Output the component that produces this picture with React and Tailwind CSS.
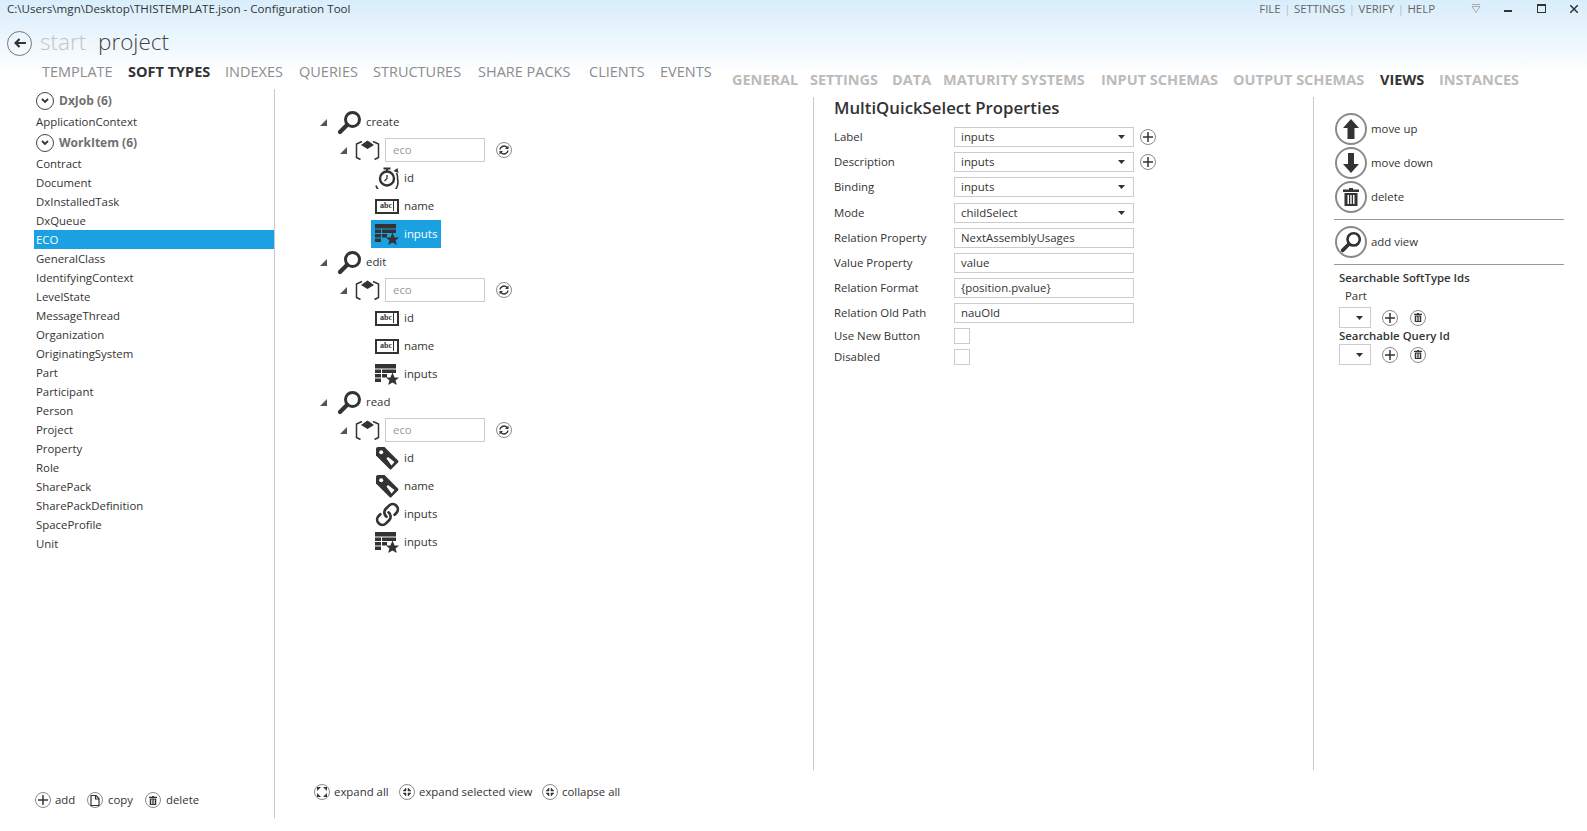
import { Link } from "lucide-react";

const DARK = "#333333";

const leftTabs = [
  ["TEMPLATE", "w-[86px]"],
  ["SOFT TYPES", "w-[97px] font-bold text-[#333]"],
  ["INDEXES", "w-[74px]"],
  ["QUERIES", "w-[74px]"],
  ["STRUCTURES", "w-[105px]"],
  ["SHARE PACKS", "w-[111px]"],
  ["CLIENTS", "w-[71px]"],
  ["EVENTS", "w-[72px]"],
];

const rightTabs = [
  ["GENERAL", "w-[78px]"],
  ["SETTINGS", "w-[82px]"],
  ["DATA", "w-[51px]"],
  ["MATURITY SYSTEMS", "w-[158px]"],
  ["INPUT SCHEMAS", "w-[132px]"],
  ["OUTPUT SCHEMAS", "w-[147px]"],
  ["VIEWS", "w-[59px] text-[#333]"],
  ["INSTANCES", "w-[90px]"],
];

const softTypes = [
  "Contract",
  "Document",
  "DxInstalledTask",
  "DxQueue",
  "ECO",
  "GeneralClass",
  "IdentifyingContext",
  "LevelState",
  "MessageThread",
  "Organization",
  "OriginatingSystem",
  "Part",
  "Participant",
  "Person",
  "Project",
  "Property",
  "Role",
  "SharePack",
  "SharePackDefinition",
  "SpaceProfile",
  "Unit",
];

const Magnifier = ({ size = 25 }) => (
  <svg width={size} height={size} viewBox="0 0 25 24" className="shrink-0">
    <circle cx="15.5" cy="9" r="7" fill="none" stroke={DARK} strokeWidth="3" />
    <line x1="10" y1="14.5" x2="3" y2="21.5" stroke={DARK} strokeWidth="4.2" strokeLinecap="round" />
  </svg>
);

const CubeIcon = () => (
  <svg width="25" height="24" viewBox="0 0 25 24" className="shrink-0">
    <path d="M7 3.5 L1.5 6 V19.5 L5.5 21.5" fill="none" stroke={DARK} strokeWidth="1.5" />
    <path d="M18 3.5 L23.5 6 V19.5 L19.5 21.5" fill="none" stroke={DARK} strokeWidth="1.5" />
    <path d="M12.5 2.5 L19 7 L12.5 11 L6 7 Z" fill={DARK} />
  </svg>
);

const Stopwatch = () => (
  <svg width="24" height="22" viewBox="0 0 24 22" className="shrink-0">
    <circle cx="12" cy="11.5" r="7" fill="none" stroke={DARK} strokeWidth="2.4" />
    <rect x="8.5" y="0.5" width="7" height="2" fill={DARK} />
    <rect x="11" y="2" width="2" height="2" fill={DARK} />
    <path d="M12 8 V11.5 L9.5 14" fill="none" stroke={DARK} strokeWidth="1.3" />
    <path d="M1 18.5 A10.5 10.5 0 0 0 22.5 12 A10 10 0 0 0 21.5 6" fill="none" stroke={DARK} strokeWidth="1.6" />
    <path d="M18.5 4 L22.5 1 L23.5 6 Z" fill={DARK} />
  </svg>
);

const AbcIcon = () => (
  <span className="flex h-[15px] w-[24px] shrink-0 items-center justify-center border-2 border-[#333] font-['Liberation_Serif',serif] text-[8px] leading-none font-bold text-[#333]">
    abc<span className="ml-[1px] h-[10px] w-[1px] bg-[#333]" />
  </span>
);

const TableStar = () => (
  <svg width="24" height="21" viewBox="0 0 24 21" className="shrink-0">
    <rect x="0" y="0" width="21" height="4.5" fill={DARK} />
    <rect x="0" y="5.5" width="6" height="3.5" fill={DARK} />
    <rect x="7" y="5.5" width="14" height="3.5" fill={DARK} />
    <rect x="0" y="10" width="6" height="3.5" fill={DARK} />
    <rect x="7" y="10" width="5" height="3.5" fill={DARK} />
    <rect x="0" y="14.5" width="6" height="3.5" fill={DARK} />
    <path d="M17.5 8.5 L19.6 13.4 L24 13.6 L20.6 16.5 L21.8 21 L17.5 18.5 L13.2 21 L14.4 16.5 L11 13.6 L15.4 13.4 Z" fill={DARK} />
  </svg>
);

const TagIcon = () => (
  <svg width="24" height="24" viewBox="0 0 24 24" className="shrink-0">
    <path d="M3 1 H9.5 L23 14.5 Q24 15.5 23 16.5 L16.5 23 Q15.5 24 14.5 23 L1 9.5 V3 Q1 1 3 1 Z" fill={DARK} />
    <circle cx="6.2" cy="6.2" r="2" fill="#fff" />
    <path d="M11.5 12.5 L13 11 L19.5 16 L16.5 19.5 Z" fill="#fff" />
  </svg>
);

const LinkIcon = () => <Link size={25} strokeWidth={2.6} color={DARK} className="shrink-0 -scale-x-100 rotate-90" />;

const CircleBtn = ({ size = "h-4 w-4", children }) => (
  <span className={`flex ${size} shrink-0 items-center justify-center rounded-full border border-[#8a8a8a] bg-white`}>
    {children}
  </span>
);

const Plus = () => (
  <svg width="10" height="10" viewBox="0 0 10 10">
    <path d="M5 0 V10 M0 5 H10" stroke={DARK} strokeWidth="1.5" />
  </svg>
);

const Trash = ({ w = 8, h = 9 }) => (
  <svg width={w} height={h} viewBox="0 0 16 18">
    <path d="M6 0 H10 V1.5 H16 V4 H0 V1.5 H6 Z" fill={DARK} />
    <path d="M1.5 5 H14.5 V18 H1.5 Z M4.5 7 V16 H6 V7 Z M7.3 7 V16 H8.7 V7 Z M10 7 V16 H11.5 V7 Z" fill={DARK} fillRule="evenodd" />
  </svg>
);

const Copy = () => (
  <svg width="10" height="11" viewBox="0 0 10 11">
    <path d="M1 .5 H6 L9 3.5 V10.5 H1 Z" fill="none" stroke={DARK} strokeWidth="1.2" />
    <path d="M5.5 .5 V4 H9" fill="none" stroke={DARK} strokeWidth="1.2" />
  </svg>
);

const Refresh = () => (
  <svg width="10" height="10" viewBox="0 0 10 10">
    <path d="M1 4.5 A4 4 0 0 1 8 2.5" fill="none" stroke={DARK} strokeWidth="1.5" />
    <path d="M9.5 .5 V4 H6 Z" fill={DARK} />
    <path d="M9 5.5 A4 4 0 0 1 2 7.5" fill="none" stroke={DARK} strokeWidth="1.5" />
    <path d="M.5 9.5 V6 H4 Z" fill={DARK} />
  </svg>
);

const Expand = ({ inward }) => (
  <svg width="10" height="10" viewBox="0 0 10 10">
    {inward ? (
      <path d="M4 1 V4 H1 Z M6 1 V4 H9 Z M4 9 V6 H1 Z M6 9 V6 H9 Z" fill={DARK} stroke={DARK} strokeWidth=".5" />
    ) : (
      <path d="M0 0 H4 L0 4 Z M10 0 H6 L10 4 Z M0 10 H4 L0 6 Z M10 10 H6 L10 6 Z" fill={DARK} />
    )}
  </svg>
);

const Triangle = () => (
  <svg width="7" height="7" viewBox="0 0 7 7" className="mr-[1px] shrink-0">
    <polygon points="0,7 7,7 7,0" fill="#555" />
  </svg>
);

const Chevron = () => (
  <span className="flex h-[18px] w-[18px] shrink-0 items-center justify-center rounded-full border-[1.5px] border-[#444]">
    <svg width="8" height="6" viewBox="0 0 8 6">
      <path d="M1 1 L4 4 L7 1" fill="none" stroke="#333" strokeWidth="1.8" />
    </svg>
  </span>
);

const ViewRow = ({ name }) => (
  <div className="flex h-[28px] items-center pl-[45px]">
    <Triangle />
    <span className="ml-[9px] flex"><Magnifier /></span>
    <span className="ml-[4px]">{name}</span>
  </div>
);

const EcoRow = () => (
  <div className="flex h-[28px] items-center pl-[65px]">
    <Triangle />
    <span className="ml-[7px] flex"><CubeIcon /></span>
    <div className="ml-[5px] flex h-[24px] w-[100px] items-center border border-[#ccc] pl-[7px] text-[#999]">eco</div>
    <span className="ml-[11px] flex"><CircleBtn><Refresh /></CircleBtn></span>
  </div>
);

const Leaf = ({ icon, label, selected }) => (
  <div className="flex h-[28px] items-center pl-[96px]">
    <div className={`flex h-[28px] w-[70px] items-center pl-[4px] ${selected ? "bg-[#1ba1e2] text-white" : ""}`}>
      <span className="flex w-[24px] justify-center">{icon}</span>
      <span className="ml-[5px]">{label}</span>
    </div>
  </div>
);

const Select = ({ value }) => (
  <div className="flex h-[20px] w-[180px] items-center justify-between border border-[#ccc] px-[6px]">
    <span>{value}</span>
    <svg width="7" height="4" viewBox="0 0 7 4" className="mr-[2px]"><polygon points="0,0 7,0 3.5,4" fill="#333" /></svg>
  </div>
);

const TextBox = ({ value }) => (
  <div className="flex h-[20px] w-[180px] items-center border border-[#ccc] px-[6px]">{value}</div>
);

const PropRow = ({ label, children, plus, className = "mb-[5px]" }) => (
  <div className={`flex h-[20px] items-center ${className}`}>
    <span className="w-[120px]">{label}</span>
    {children}
    {plus && <span className="ml-[6px] flex"><CircleBtn><Plus /></CircleBtn></span>}
  </div>
);

const SideBtn = ({ icon, label, className = "" }) => (
  <div className={`ml-[1px] flex h-[34px] items-center ${className}`}>
    <span className="flex h-[32px] w-[32px] items-center justify-center rounded-full border-2 border-[#8a8a8a]">{icon}</span>
    <span className="ml-[4px]">{label}</span>
  </div>
);

const SmallSelect = () => (
  <div className="flex h-[21px] w-[32px] items-center justify-center border border-[#ccc] pl-[8px]">
    <svg width="7" height="4" viewBox="0 0 7 4"><polygon points="0,0 7,0 3.5,4" fill="#333" /></svg>
  </div>
);

const SearchRow = () => (
  <div className="flex items-center">
    <SmallSelect />
    <span className="ml-[11px] flex"><CircleBtn><Plus /></CircleBtn></span>
    <span className="ml-[12px] flex"><CircleBtn><Trash /></CircleBtn></span>
  </div>
);

const App = () => {
  return (
    <div className="h-[831px] w-[1587px] overflow-hidden bg-white font-['Open_Sans',sans-serif] text-[11.4px] text-[#333]">
      {/* header */}
      <div className="h-[89px] bg-linear-to-b from-[#d8edfb] to-white to-[85%]">
        <div className="flex h-[18px] items-center justify-between pl-[7px]">
          <span className="text-[11.6px]">C:\Users\mgn\Desktop\THISTEMPLATE.json - Configuration Tool</span>
          <div className="flex items-center text-[#666]">
            <span>FILE</span>
            <span className="mx-[3.5px] text-[#bbb]">|</span>
            <span>SETTINGS</span>
            <span className="mx-[3.5px] text-[#bbb]">|</span>
            <span>VERIFY</span>
            <span className="mx-[3.5px] text-[#bbb]">|</span>
            <span>HELP</span>
            <svg width="10" height="10" viewBox="0 0 10 10" className="ml-[36px]">
              <path d="M1 .5 H9 M1 2.5 H9 L5 8.5 Z" fill="none" stroke="#aaa" strokeWidth="1" />
            </svg>
            <span className="ml-[23px] mt-[5px] h-[2px] w-[8px] bg-[#333]" />
            <span className="ml-[25px] h-[9px] w-[9px] border border-t-2 border-[#333]" />
            <svg width="8" height="8" viewBox="0 0 8 8" className="ml-[24px] mr-[9px]">
              <path d="M0 0 L8 8 M8 0 L0 8" stroke="#333" strokeWidth="1.5" />
            </svg>
          </div>
        </div>
        <div className="flex h-[44px] items-center pt-[6px] pl-[7px]">
          <span className="flex h-[25px] w-[25px] items-center justify-center rounded-full border-[1.5px] border-[#777]">
            <svg width="12" height="10" viewBox="0 0 13 11">
              <path d="M6 1 L1.5 5.5 L6 10 M2 5.5 H13" fill="none" stroke="#333" strokeWidth="2.4" />
            </svg>
          </span>
          <span className="-mt-[2px] ml-[8px] w-[58px] text-[22.5px] leading-none font-light text-[#c4c4c4]">start</span>
          <span className="-mt-[2px] text-[22.5px] leading-none font-light text-[#444]">project</span>
        </div>
        <div className="flex items-start pl-[42px]">
          <div className="flex h-[20px] w-[690px] items-center text-[14.5px] whitespace-nowrap text-[#8c8c8c]">
            {leftTabs.map(([name, cls]) => (
              <span key={name} className={cls}>{name}</span>
            ))}
          </div>
          <div className="mt-[8px] flex h-[20px] items-center text-[14.5px] font-bold whitespace-nowrap text-[#bbbbbb]">
            {rightTabs.map(([name, cls]) => (
              <span key={name} className={cls}>{name}</span>
            ))}
          </div>
        </div>
      </div>

      <div className="flex items-start">
        {/* soft type list */}
        <aside className="flex h-[729px] w-[275px] shrink-0 flex-col border-r border-[#c8c8c8] pl-[34px]">
          <div className="flex h-[22px] items-center gap-[5px] pt-[1px] pl-[2px] text-[12px] font-bold text-[#707070]">
            <Chevron /> DxJob (6)
          </div>
          <div className="flex h-[21px] items-center pl-[2px]">ApplicationContext</div>
          <div className="flex h-[22px] items-center gap-[5px] pl-[2px] text-[12px] font-bold text-[#707070]">
            <Chevron /> WorkItem (6)
          </div>
          {softTypes.map((t) => (
            <div
              key={t}
              className={`flex h-[19px] items-center pl-[2px] ${t === "ECO" ? "bg-[#1ba1e2] text-white" : ""}`}
            >
              {t}
            </div>
          ))}
          <div className="mt-auto mb-[9px] flex h-[18px] items-center pl-[1px]">
            <CircleBtn><Plus /></CircleBtn>
            <span className="ml-[4px] w-[32px]">add</span>
            <CircleBtn><Copy /></CircleBtn>
            <span className="ml-[5px] w-[37px]">copy</span>
            <CircleBtn><Trash /></CircleBtn>
            <span className="ml-[5px]">delete</span>
          </div>
        </aside>

        {/* view tree */}
        <div className="w-[539px] shrink-0 pt-[8px]">
          <div className="h-[673px] border-r border-[#c8c8c8] pt-[11px]">
            <ViewRow name="create" />
            <EcoRow />
            <Leaf icon={<Stopwatch />} label="id" />
            <Leaf icon={<AbcIcon />} label="name" />
            <Leaf icon={<TableStar />} label="inputs" selected />
            <ViewRow name="edit" />
            <EcoRow />
            <Leaf icon={<AbcIcon />} label="id" />
            <Leaf icon={<AbcIcon />} label="name" />
            <Leaf icon={<TableStar />} label="inputs" />
            <ViewRow name="read" />
            <EcoRow />
            <Leaf icon={<TagIcon />} label="id" />
            <Leaf icon={<TagIcon />} label="name" />
            <Leaf icon={<LinkIcon />} label="inputs" />
            <Leaf icon={<TableStar />} label="inputs" />
          </div>
          <div className="mt-[13px] flex h-[18px] items-center pl-[39px]">
            <div className="flex w-[85px] items-center gap-[4px]"><CircleBtn><Expand /></CircleBtn>expand all</div>
            <div className="flex w-[143px] items-center gap-[4px]"><CircleBtn><Expand inward /></CircleBtn>expand selected view</div>
            <div className="flex items-center gap-[4px]"><CircleBtn><Expand inward /></CircleBtn>collapse all</div>
          </div>
        </div>

        {/* properties */}
        <div className="mt-[8px] h-[673px] w-[500px] shrink-0 border-r border-[#c8c8c8] pl-[20px]">
          <div className="mb-[8px] h-[22px] text-[16.8px] leading-[22px] font-semibold">MultiQuickSelect Properties</div>
          <PropRow label="Label" plus><Select value="inputs" /></PropRow>
          <PropRow label="Description" plus><Select value="inputs" /></PropRow>
          <PropRow label="Binding" className="mb-[6px]"><Select value="inputs" /></PropRow>
          <PropRow label="Mode"><Select value="childSelect" /></PropRow>
          <PropRow label="Relation Property"><TextBox value="NextAssemblyUsages" /></PropRow>
          <PropRow label="Value Property"><TextBox value="value" /></PropRow>
          <PropRow label="Relation Format"><TextBox value="{position.pvalue}" /></PropRow>
          <PropRow label="Relation Old Path"><TextBox value="nauOld" /></PropRow>
          <div className="mt-[5px] mb-[5px] flex h-[16px] items-center">
            <span className="w-[120px]">Use New Button</span>
            <span className="h-[16px] w-[16px] border border-[#ccc]" />
          </div>
          <div className="flex h-[16px] items-center">
            <span className="w-[120px]">Disabled</span>
            <span className="h-[16px] w-[16px] border border-[#ccc]" />
          </div>
        </div>

        {/* actions */}
        <div className="mt-[8px] w-[250px] shrink-0 pt-[15px] pl-[20px]">
          <SideBtn
            label="move up"
            icon={<svg width="18" height="22" viewBox="0 0 18 22"><path d="M9 1 L17 10 L12.5 10 L12.5 21 L5.5 21 L5.5 10 L1 10 Z" fill={DARK} /></svg>}
          />
          <SideBtn
            label="move down"
            icon={<svg width="18" height="22" viewBox="0 0 18 22"><path d="M9 21 L17 12 L12 12 L12 1 L6 1 L6 12 L1 12 Z" fill={DARK} /></svg>}
          />
          <SideBtn label="delete" icon={<Trash w={16} h={20} />} />
          <div className="mt-[5px] border-t border-[#999]" />
          <SideBtn label="add view" icon={<Magnifier size={22} />} className="mt-[5px]" />
          <div className="mt-[5px] border-t border-[#999]" />
          <div className="mt-[4px] flex h-[18px] items-center pl-[5px] font-semibold">Searchable SoftType Ids</div>
          <div className="flex h-[18px] items-center pl-[11px]">Part</div>
          <div className="mt-[2px] pl-[5px]"><SearchRow /></div>
          <div className="flex h-[15px] items-center pl-[5px] font-semibold">Searchable Query Id</div>
          <div className="mt-[1px] pl-[5px]"><SearchRow /></div>
        </div>
      </div>
    </div>
  );
};

export default App;
